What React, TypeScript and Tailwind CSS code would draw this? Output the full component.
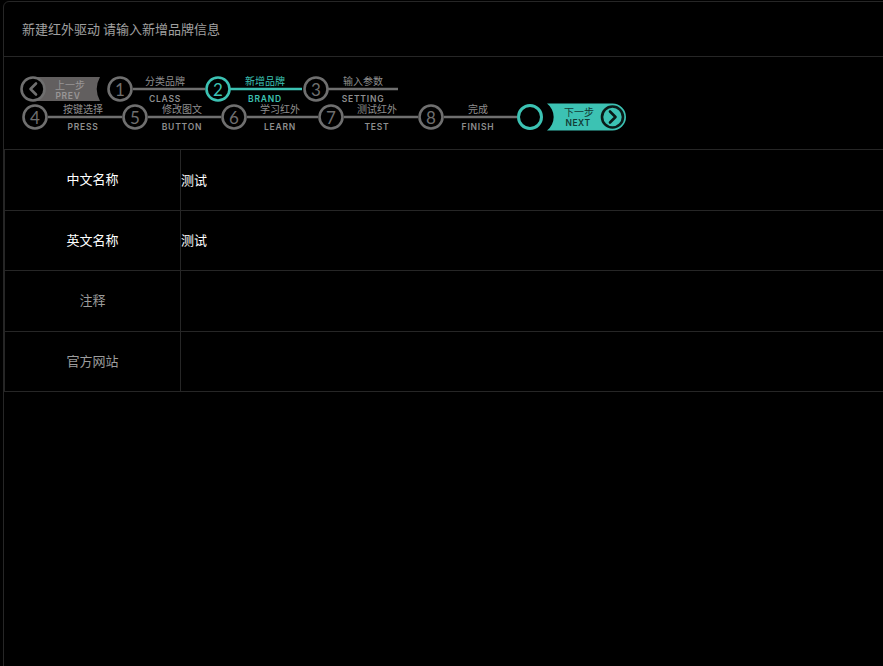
import React from 'react';

const TEAL = '#3cc2b3';
const RING = '#6f6f6f';
const LABEL = '#8e8e8e';

interface Step {
  n: string;
  x: number;
  y: number;
  active?: boolean;
}

interface Link {
  from: number;
  to: number;
  y: number;
  cx: number;
  zh: string;
  en: string;
  active?: boolean;
}

const steps: Step[] = [
  { n: '1', x: 120, y: 89 },
  { n: '2', x: 218, y: 89, active: true },
  { n: '3', x: 316, y: 89 },
  { n: '4', x: 35, y: 117 },
  { n: '5', x: 135, y: 117 },
  { n: '6', x: 234, y: 117 },
  { n: '7', x: 331, y: 117 },
  { n: '8', x: 431, y: 117 },
];

const links: Link[] = [
  { from: 133, to: 205, y: 89, cx: 165, zh: '分类品牌', en: 'CLASS' },
  { from: 230, to: 302, y: 89, cx: 265, zh: '新增品牌', en: 'BRAND', active: true },
  { from: 328, to: 398, y: 89, cx: 363, zh: '输入参数', en: 'SETTING' },
  { from: 48, to: 122, y: 117, cx: 83, zh: '按键选择', en: 'PRESS' },
  { from: 148, to: 221, y: 117, cx: 182, zh: '修改图文', en: 'BUTTON' },
  { from: 247, to: 318, y: 117, cx: 280, zh: '学习红外', en: 'LEARN' },
  { from: 344, to: 418, y: 117, cx: 377, zh: '测试红外', en: 'TEST' },
  { from: 444, to: 517, y: 117, cx: 478, zh: '完成', en: 'FINISH' },
];

const zhFont = '"Noto Sans CJK SC", "Noto Sans", sans-serif';
const enFont = 'Inter, "Noto Sans", sans-serif';

function StepBar() {
  return (
    <svg width="640" height="70" viewBox="4 68 640 70" className="block">
      {/* prev pill */}
      <path d="M33 77 H100 A25 25 0 0 0 100 101 H33 Z" fill="#625f5f" />
      <text x="70" y="84" fontSize="10" fill="#999696" textAnchor="middle" dominantBaseline="central" fontFamily={zhFont}>
        上一步
      </text>
      <text x="68" y="95.5" fontSize="8.5" fill="#999696" textAnchor="middle" dominantBaseline="central" fontFamily={enFont} fontWeight="600" letterSpacing="0.7">
        PREV
      </text>
      <circle cx="33" cy="89" r="11.5" fill="#000" stroke={RING} strokeWidth="2.6" />
      <path d="M36 83.5 L30.5 89 L36 94.5" fill="none" stroke={RING} strokeWidth="2.6" strokeLinecap="round" strokeLinejoin="round" />

      {links.map((l) => (
        <g key={l.en}>
          <line x1={l.from} y1={l.y} x2={l.to} y2={l.y} stroke={l.active ? TEAL : RING} strokeWidth="2.5" />
          <text x={l.cx} y={l.y - 8.5} fontSize="10" fill={l.active ? TEAL : LABEL} textAnchor="middle" dominantBaseline="central" fontFamily={zhFont}>
            {l.zh}
          </text>
          <text x={l.cx} y={l.y + 9.5} fontSize="8.5" fill={l.active ? TEAL : LABEL} textAnchor="middle" dominantBaseline="central" fontFamily={enFont} fontWeight="600" letterSpacing="0.8">
            {l.en}
          </text>
        </g>
      ))}

      {steps.map((s) => (
        <g key={s.n}>
          <circle cx={s.x} cy={s.y} r="11.5" fill="#000" stroke={s.active ? TEAL : RING} strokeWidth="2.6" />
          <text x={s.x} y={s.y + 0.5} fontSize="17" fill={s.active ? TEAL : RING} textAnchor="middle" dominantBaseline="central" fontFamily="Lato, Inter, sans-serif">
            {s.n}
          </text>
        </g>
      ))}

      {/* next */}
      <circle cx="530" cy="117" r="11.5" fill="#000" stroke={TEAL} strokeWidth="3" />
      <path d="M547 103.5 H612.5 A13.5 13.5 0 0 1 612.5 130.5 H547 A17 17 0 0 0 547 103.5 Z" fill={TEAL} />
      <text x="579" y="111.5" fontSize="10" fill="#123a35" textAnchor="middle" dominantBaseline="central" fontFamily={zhFont}>
        下一步
      </text>
      <text x="578" y="122.5" fontSize="8.5" fill="#123a35" textAnchor="middle" dominantBaseline="central" fontFamily={enFont} fontWeight="600" letterSpacing="0.5">
        NEXT
      </text>
      <circle cx="612.5" cy="117" r="10.5" fill={TEAL} stroke="#0a1a18" strokeWidth="2.6" />
      <path d="M610 111.5 L615.5 117 L610 122.5" fill="none" stroke="#0a1a18" strokeWidth="2.6" strokeLinecap="round" strokeLinejoin="round" />
    </svg>
  );
}

const rows = [
  { label: '中文名称', value: '测试', strong: true },
  { label: '英文名称', value: '测试', strong: true },
  { label: '注释', value: '', strong: false },
  { label: '官方网站', value: '', strong: false },
];

export default function App() {
  return (
    <div className="h-[666px] w-[883px] overflow-hidden bg-black" style={{ fontFamily: zhFont }}>
      <div className="ml-[3px] mt-[1px] h-[672px] w-[900px] rounded-md border border-[#262626] bg-black">
        <div className="flex h-[55px] items-center border-b border-[#262626] pl-[18px] text-[13px] text-[#a0a0a0]">
          新建红外驱动 请输入新增品牌信息
        </div>

        <div className="h-[92px] pt-[11px]">
          <StepBar />
        </div>

        <div className="border-l border-t border-[#262626]">
          {rows.map((r) => (
            <div key={r.label} className="flex h-[60.5px] border-b border-[#262626]">
              <div
                className={`flex w-[176px] items-center justify-center border-r border-[#262626] pb-[2px] text-[13px] ${
                  r.strong ? 'text-white' : 'text-[#9c9c9c]'
                }`}
              >
                {r.label}
              </div>
              <div className="flex flex-1 items-center pb-[1px] text-[13px] text-white">{r.value}</div>
            </div>
          ))}
        </div>
      </div>
    </div>
  );
}
